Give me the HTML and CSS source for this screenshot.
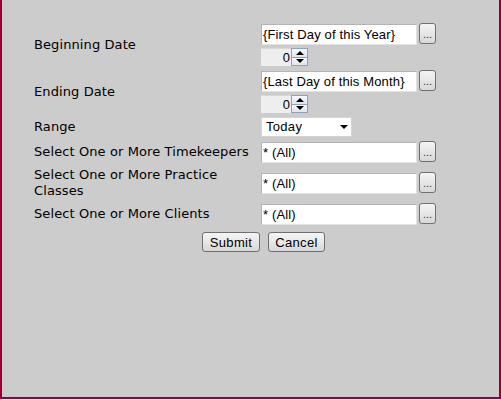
FILE: index.html
```html
<!DOCTYPE html>
<html>
<head>
<meta charset="utf-8">
<link rel="stylesheet" href="styles.css">
</head>
<body>
<div class="frame">
  <form class="form">
    <div class="grid">
      <div class="label">Beginning Date</div>
      <div class="ctrl stack">
        <div class="line"><div class="field">{First Day of this Year}</div><button type="button" class="dots">...</button></div>
        <div class="spin"><div class="num">0</div><div class="arrows"><span class="up"></span><span class="down"></span></div></div>
      </div>

      <div class="label">Ending Date</div>
      <div class="ctrl stack">
        <div class="line"><div class="field">{Last Day of this Month}</div><button type="button" class="dots">...</button></div>
        <div class="spin"><div class="num">0</div><div class="arrows"><span class="up"></span><span class="down"></span></div></div>
      </div>

      <div class="label">Range</div>
      <div class="ctrl"><div class="select">Today<span class="caret"></span></div></div>

      <div class="label">Select One or More Timekeepers</div>
      <div class="ctrl"><div class="line"><div class="field">* (All)</div><button type="button" class="dots">...</button></div></div>

      <div class="label">Select One or More Practice Classes</div>
      <div class="ctrl"><div class="line"><div class="field">* (All)</div><button type="button" class="dots">...</button></div></div>

      <div class="label">Select One or More Clients</div>
      <div class="ctrl"><div class="line"><div class="field">* (All)</div><button type="button" class="dots">...</button></div></div>
    </div>
    <div class="actions">
      <button type="button" class="btn submit">Submit</button>
      <button type="button" class="btn cancel">Cancel</button>
    </div>
  </form>
</div>
</body>
</html>
```

FILE: styles.css
```css
html, body {
  margin: 0;
  padding: 0;
  background: #ffffff;
}

.frame {
  width: 501px;
  height: 399px;
  box-sizing: border-box;
  background: #cccccc;
  border: 2px solid #990033;
  border-top: none;
  padding: 23px 0 0 32px;
}

.form {
  width: 459px;
}

.grid {
  display: grid;
  grid-template-columns: 227px auto;
  row-gap: 4px;
  align-items: center;
}

.label {
  font-family: "DejaVu Sans", Verdana, sans-serif;
  font-size: 13px;
  line-height: 16px;
  letter-spacing: 0.1px;
  color: #000;
  padding-right: 10px;
}

.ctrl {
  display: flex;
  flex-direction: column;
}

.stack {
  gap: 3px;
}

.line {
  display: flex;
  align-items: flex-start;
  gap: 2px;
}

.field {
  width: 153px;
  height: 19px;
  margin-top: 1px;
  background: #ffffff;
  border: 1px solid #b4b4b4;
  border-right-color: #e3e3e3;
  border-bottom-color: #e3e3e3;
  font-family: "Liberation Sans", Arial, sans-serif;
  font-size: 13px;
  letter-spacing: 0.15px;
  line-height: 19px;
  padding-left: 1px;
  color: #000;
  white-space: nowrap;
  overflow: hidden;
}

.dots {
  width: 17px;
  height: 21px;
  padding: 0;
  margin: 0;
  border: 1px solid #707070;
  border-radius: 3px;
  background: linear-gradient(#f4f4f4, #e6e6e6 50%, #d8d8d8);
  font-family: "Liberation Sans", Arial, sans-serif;
  font-size: 11px;
  line-height: 11px;
  color: #333;
  display: flex;
  align-items: flex-end;
  justify-content: center;
  padding-bottom: 3px;
  box-sizing: border-box;
}

.spin {
  display: flex;
  height: 18px;
}

.num {
  width: 30px;
  height: 18px;
  background: #eeeeee;
  border-top: 1px solid #d8d8d8;
  box-sizing: border-box;
  font-family: "Liberation Sans", Arial, sans-serif;
  font-size: 13px;
  line-height: 17px;
  text-align: right;
  padding-right: 1px;
  color: #000;
}

.arrows {
  width: 17px;
  display: flex;
  flex-direction: column;
}

.arrows span {
  flex: 1;
  border: 1px solid #8fa3b8;
  background: linear-gradient(#f6f8fa, #dfe5eb);
  display: flex;
  align-items: center;
  justify-content: center;
}

.arrows .down {
  border-top: none;
}

.arrows .up::after {
  content: "";
  border-left: 4px solid transparent;
  border-right: 4px solid transparent;
  border-bottom: 4px solid #000;
}

.arrows .down::after {
  content: "";
  border-left: 4px solid transparent;
  border-right: 4px solid transparent;
  border-top: 4px solid #000;
}

.select {
  width: 91px;
  height: 20px;
  box-sizing: border-box;
  background: #fff;
  border: 1px solid #d4d4d4;
  font-family: "Liberation Sans", Arial, sans-serif;
  font-size: 13px;
  letter-spacing: 0.3px;
  line-height: 18px;
  padding-left: 4px;
  display: flex;
  align-items: center;
  justify-content: space-between;
  padding-right: 3px;
}

.caret {
  border-left: 4px solid transparent;
  border-right: 4px solid transparent;
  border-top: 4px solid #000;
}

.actions {
  display: flex;
  justify-content: center;
  gap: 8px;
  margin-top: 7px;
}

.btn {
  height: 20px;
  padding: 0;
  border: 1px solid #707070;
  border-radius: 3px;
  background: linear-gradient(#f4f4f4, #e8e8e8 50%, #d6d6d6);
  font-family: "Liberation Sans", Arial, sans-serif;
  font-size: 13px;
  letter-spacing: 0.3px;
  color: #000;
}

.submit {
  width: 58px;
}

.cancel {
  width: 57px;
}
```
